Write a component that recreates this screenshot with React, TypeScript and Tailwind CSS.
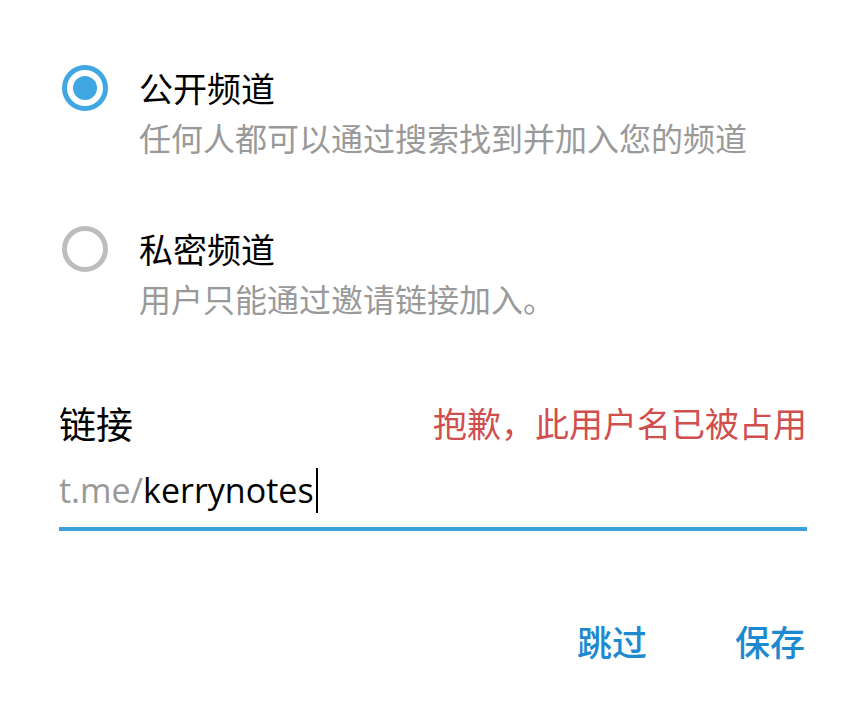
const cjk = "font-['Noto_Sans_CJK_SC',sans-serif]";

const Radio = ({ checked }: { checked: boolean }) => (
  <div
    className={`flex h-[46px] w-[46px] shrink-0 items-center justify-center rounded-full border-[5px] ${
      checked ? "border-[#40a7e3]" : "border-[#bdbdbd]"
    }`}
  >
    {checked && <div className="h-[24px] w-[24px] rounded-full bg-[#40a7e3]" />}
  </div>
);

const Option = ({
  checked,
  title,
  desc,
}: {
  checked: boolean;
  title: string;
  desc: string;
}) => (
  <div className="flex flex-col">
    <div className="flex items-center gap-[31px]">
      <Radio checked={checked} />
      <div className="text-[34px] leading-[44px] text-black">{title}</div>
    </div>
    <div className="mt-[4px] pl-[77px] text-[32px] leading-[44px] text-[#999999]">{desc}</div>
  </div>
);

export default function App() {
  return (
    <div className={`h-[702px] w-[860px] bg-white ${cjk}`}>
      <div className="flex flex-col pl-[62px] pr-[54px] pt-[65px]">
        <Option
          checked
          title="公开频道"
          desc="任何人都可以通过搜索找到并加入您的频道"
        />
        <div className="mt-[67px]">
          <Option checked={false} title="私密频道" desc="用户只能通过邀请链接加入。" />
        </div>
      </div>

      <div className="mt-[81px] flex flex-col pl-[59px] pr-[53px]">
        <div className="flex items-center justify-between">
          <span className="text-[37px] leading-[44px] text-black">链接</span>
          <span className="text-[34px] leading-[44px] text-[#d14e4e]">抱歉，此用户名已被占用</span>
        </div>
        <div className="mt-[22px] flex h-[46px] items-center font-['Open_Sans',sans-serif] text-[34px]">
          <span className="text-[#999999]">t.me/</span>
          <span className="text-black">kerrynotes</span>
          <span className="ml-[2px] h-[45px] w-[2px] bg-black" />
        </div>
        <div className="mt-[14px] h-[4px] bg-[#3d9fdd]" />
      </div>

      <div className="mt-[88px] flex justify-end gap-[88px] pr-[55px] text-[35px] font-medium leading-[44px] text-[#1d8ad0]">
        <span>跳过</span>
        <span>保存</span>
      </div>
    </div>
  );
}
